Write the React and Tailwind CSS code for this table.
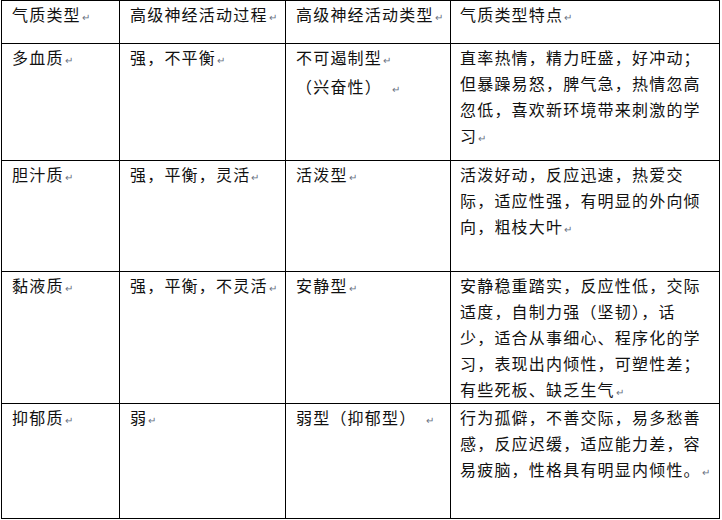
import React from 'react';

// Word-style table: paragraph marks shown after each paragraph
const Mark = ({ gap }) => (
  <span className={`text-[10px] text-gray-500 tracking-normal ${gap ? 'ml-[10px]' : 'ml-[1px]'}`}>↵</span>
);

const Lines = ({ lines, gap }) => (
  <div>
    {lines.map((line, i) => (
      <div key={i} className="whitespace-nowrap">
        {line}
        {i === lines.length - 1 && <Mark gap={gap} />}
      </div>
    ))}
  </div>
);

const rows = [
  {
    h: '气质类型',
    a: ['强，不平衡'],
    name: '多血质',
    type: [['不可遏制型'], ['（兴奋性）', true]],
    desc: ['直率热情，精力旺盛，好冲动；', '但暴躁易怒，脾气急，热情忽高', '忽低，喜欢新环境带来刺激的学', '习'],
  },
  {
    name: '胆汁质',
    a: ['强，平衡，灵活'],
    type: [['活泼型']],
    desc: ['活泼好动，反应迅速，热爱交', '际，适应性强，有明显的外向倾', '向，粗枝大叶'],
  },
  {
    name: '黏液质',
    a: ['强，平衡，不灵活'],
    type: [['安静型']],
    desc: ['安静稳重踏实，反应性低，交际', '适度，自制力强（坚韧），话', '少，适合从事细心、程序化的学', '习，表现出内倾性，可塑性差；', '有些死板、缺乏生气'],
  },
  {
    name: '抑郁质',
    a: ['弱'],
    type: [['弱型（抑郁型）', true]],
    desc: ['行为孤僻，不善交际，易多愁善', '感，反应迟缓，适应能力差，容', '易疲脑，性格具有明显内倾性。'],
  },
];

const cell = 'bg-white pl-[10px]';

export default function App() {
  return (
    <div className="w-[722px] h-[520px] bg-white">
      <div
        className="ml-px w-[719px] grid grid-cols-[117px_165px_164px_268px] grid-rows-[42px_116px_110px_131px_114px] gap-px p-px bg-black text-[16px] leading-[26px] tracking-[1.2px] text-[#111]"
        style={{ fontFamily: '"Noto Sans CJK SC", "Noto Sans", sans-serif' }}
      >
        <div className={cell}><Lines lines={['气质类型']} /></div>
        <div className={cell}><Lines lines={['高级神经活动过程']} /></div>
        <div className={cell}><Lines lines={['高级神经活动类型']} /></div>
        <div className="bg-white pl-[9px]"><Lines lines={['气质类型特点']} /></div>
        {rows.map((r) => (
          <React.Fragment key={r.name}>
            <div className={cell}><Lines lines={[r.name]} /></div>
            <div className={cell}><Lines lines={r.a} /></div>
            <div className={cell}>
              {r.type.map(([t, gap]) => (
                <Lines key={t} lines={[t]} gap={gap} />
              ))}
            </div>
            <div className="bg-white pl-[9px]"><Lines lines={r.desc} /></div>
          </React.Fragment>
        ))}
      </div>
    </div>
  );
}
